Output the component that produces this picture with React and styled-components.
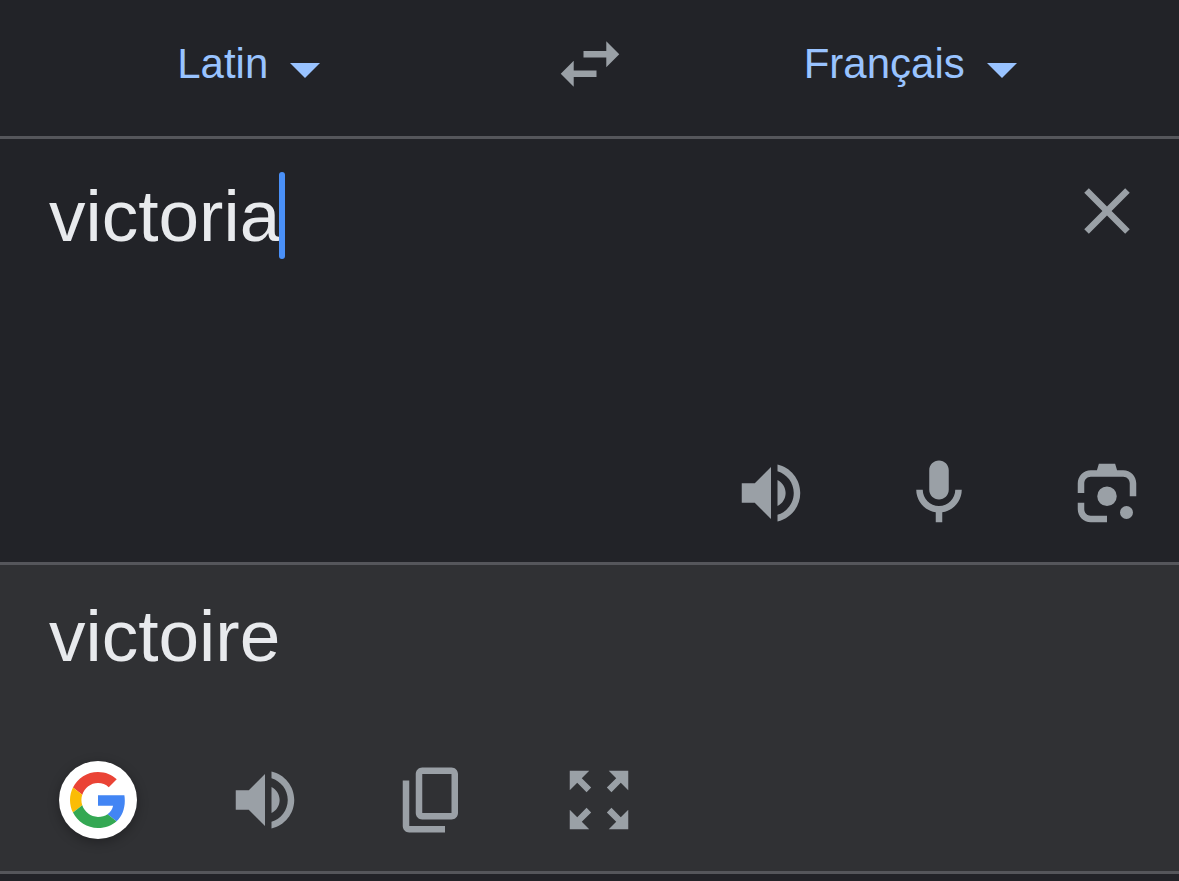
import React, { useState } from "react";
import styled, { createGlobalStyle } from "styled-components";

const LANGUAGES = ["Latin", "Français", "English", "Deutsch", "Español"];

const PATHS = {
  swap: "M6.99 11L3 15l3.99 4v-3H14v-2H6.99v-3zM21 9l-3.99-4v3H10v2h7.01v3L21 9z",
  close:
    "M19 6.41L17.59 5 12 10.59 6.41 5 5 6.41 10.59 12 5 17.59 6.41 19 12 13.41 17.59 19 19 17.59 13.41 12z",
  volume:
    "M3 9v6h4l5 5V4L7 9H3zM16.5 12c0-1.77-1.02-3.29-2.5-4.03v8.05c1.48-.73 2.5-2.25 2.5-4.02zM14 3.23v2.06c2.89.86 5 3.54 5 6.71s-2.11 5.85-5 6.71v2.06c4.01-.91 7-4.49 7-8.77s-2.99-7.86-7-8.77z",
  mic: "M12 14c1.66 0 3-1.34 3-3V5c0-1.66-1.34-3-3-3S9 3.34 9 5v6c0 1.66 1.34 3 3 3zM17 11c0 2.76-2.24 5-5 5s-5-2.24-5-5H5c0 3.53 2.61 6.43 6 6.92V21h2v-3.08c3.39-.49 6-3.39 6-6.92h-2z",
  lens: "M3 12V9c0-2.2 1.8-4 4-4h1.9l.6-2h5l.6 2H17c2.2 0 4 1.8 4 4v4h-2V9c0-1.1-.9-2-2-2H7c-1.1 0-2 .9-2 2v3H3zM3 15h2v2c0 1.1.9 2 2 2h5v2H7c-2.2 0-4-1.8-4-4v-2zM12 10a3 3 0 1 0 0 6 3 3 0 0 0 0-6zM18 16a2 2 0 1 0 0 4 2 2 0 0 0 0-4z",
  copy: "M9 2h9c1.1 0 2 .9 2 2v12c0 1.1-.9 2-2 2H9c-1.1 0-2-.9-2-2V4c0-1.1.9-2 2-2zM9 4v12h9V4H9zM3 6h2v14h11v2H5c-1.1 0-2-.9-2-2V6z",
  expand:
    "M15 3l2.3 2.3-2.89 2.87 1.42 1.42L18.7 6.7 21 9V3zM3 9l2.3-2.3 2.87 2.89 1.42-1.42L6.7 5.3 9 3H3zm6 12l-2.3-2.3 2.89-2.87-1.42-1.42L5.3 17.3 3 15v6zm12-6l-2.3 2.3-2.87-2.89-1.42 1.42 2.89 2.87L15 21h6z",
};

function Action({ icon, label, onClick }) {
  return (
    <IconButton type="button" aria-label={label} onClick={onClick}>
      <svg viewBox="0 0 24 24" fill="currentColor" fillRule="evenodd">
        <path d={PATHS[icon]} />
      </svg>
    </IconButton>
  );
}

function LanguagePicker({ label, value, onChange }) {
  return (
    <PickerCell>
      <Picker>
        <LanguageSelect
          aria-label={label}
          value={value}
          onChange={(e) => onChange(e.target.value)}
        >
          {LANGUAGES.map((name) => (
            <option key={name}>{name}</option>
          ))}
        </LanguageSelect>
        <Arrow viewBox="0 0 30 15">
          <path d="M0 0h30L15 15z" fill="currentColor" />
        </Arrow>
      </Picker>
    </PickerCell>
  );
}

function GoogleLogo() {
  return (
    <svg viewBox="0 0 48 48">
      <path
        fill="#ea4335"
        d="M24 9.5c3.54 0 6.71 1.22 9.21 3.6l6.85-6.85C35.9 2.38 30.47 0 24 0 14.62 0 6.51 5.38 2.56 13.22l7.98 6.19C12.43 13.72 17.74 9.5 24 9.5z"
      />
      <path
        fill="#4285f4"
        d="M46.98 24.55c0-1.57-.15-3.09-.38-4.55H24v9.02h12.94c-.58 2.96-2.26 5.48-4.78 7.18l7.73 6c4.51-4.18 7.09-10.36 7.09-17.65z"
      />
      <path
        fill="#fbbc05"
        d="M10.53 28.59c-.48-1.45-.76-2.99-.76-4.59s.27-3.14.76-4.59l-7.98-6.19C.92 16.46 0 20.12 0 24c0 3.88.92 7.54 2.56 10.78l7.97-6.19z"
      />
      <path
        fill="#34a853"
        d="M24 48c6.48 0 11.93-2.13 15.89-5.81l-7.73-6c-2.15 1.45-4.92 2.3-8.16 2.3-6.26 0-11.57-4.22-13.47-9.91l-7.98 6.19C6.51 42.62 14.62 48 24 48z"
      />
    </svg>
  );
}

function App() {
  const [from, setFrom] = useState("Latin");
  const [to, setTo] = useState("Français");
  const [text, setText] = useState("victoria");

  const swap = () => {
    setFrom(to);
    setTo(from);
  };

  return (
    <>
      <GlobalStyle />
      <Header>
        <LanguagePicker label="Source language" value={from} onChange={setFrom} />
        <Action icon="swap" label="Swap languages" onClick={swap} />
        <LanguagePicker label="Target language" value={to} onChange={setTo} />
      </Header>
      <Source>
        <EntryRow>
          <Entry
            aria-label="Text to translate"
            value={text}
            spellCheck={false}
            onChange={(e) => setText(e.target.value)}
          />
          <Caret />
          <Action icon="close" label="Clear text" onClick={() => setText("")} />
        </EntryRow>
        <SourceActions>
          <Action icon="volume" label="Listen" />
          <Action icon="mic" label="Voice input" />
          <Action icon="lens" label="Translate with camera" />
        </SourceActions>
      </Source>
      <Target>
        <Translation>victoire</Translation>
        <TargetActions>
          <LogoButton type="button" aria-label="Search with Google">
            <GoogleLogo />
          </LogoButton>
          <Action icon="volume" label="Listen to translation" />
          <Action icon="copy" label="Copy translation" />
          <Action icon="expand" label="Full screen" />
        </TargetActions>
      </Target>
    </>
  );
}

const GlobalStyle = createGlobalStyle`
  * {
    box-sizing: border-box;
  }

  body {
    margin: 0;
    background-color: #222328;
    color: #e8eaed;
    font-family: "Liberation Sans", Arial, sans-serif;
  }

  button, input, select {
    margin: 0;
    padding: 0;
    border: none;
    background: none;
    color: inherit;
    font: inherit;
  }
`;

const Header = styled.header`
  display: grid;
  grid-template-columns: 1fr auto 1fr;
  column-gap: 33px;
  align-items: center;
  padding: 25px 0 33px;
  border-bottom: 3px solid #55565b;
`;

const PickerCell = styled.div`
  display: flex;
  justify-content: center;
  padding-right: 20px;
`;

const Picker = styled.div`
  position: relative;
  color: #99c3ff;
`;

const LanguageSelect = styled.select`
  display: block;
  appearance: none;
  field-sizing: content;
  height: 48px;
  padding-right: 52px;
  font-size: 42px;
  line-height: 48px;
  cursor: pointer;

  option {
    background-color: #303134;
  }
`;

const Arrow = styled.svg`
  position: absolute;
  right: 0;
  bottom: 10px;
  width: 30px;
  height: 15px;
  pointer-events: none;
`;

const IconButton = styled.button`
  flex: none;
  width: 78px;
  height: 78px;
  color: #9aa0a6;
  cursor: pointer;

  svg {
    display: block;
    width: 100%;
    height: 100%;
  }
`;

const Source = styled.section`
  padding: 33px 33px 30px 49px;
  border-bottom: 3px solid #55565b;
`;

const EntryRow = styled.div`
  display: flex;
  align-items: flex-start;
  min-height: 282px;

  ${IconButton} {
    margin-left: auto;
  }
`;

const Entry = styled.input`
  field-sizing: content;
  min-width: 0;
  height: 87px;
  font-size: 73px;
  line-height: 87px;
  outline: none;
  caret-color: transparent;
`;

const Caret = styled.span`
  flex: none;
  width: 6px;
  height: 87px;
  margin-left: -1px;
  border-radius: 3px;
  background-color: #4a90f8;
`;

const Actions = styled.div`
  display: flex;
`;

const SourceActions = styled(Actions)`
  justify-content: flex-end;
  gap: 90px;
`;

const Target = styled.section`
  padding: 27px 33px 32px 49px;
  border-bottom: 3px solid #55565b;
  background-color: #303134;
`;

const Translation = styled.p`
  margin: 0 0 82px;
  font-size: 73px;
  line-height: 87px;
`;

const TargetActions = styled(Actions)`
  padding-left: 10px;
  gap: 89px;
`;

const LogoButton = styled.button`
  display: flex;
  align-items: center;
  justify-content: center;
  width: 78px;
  height: 78px;
  border-radius: 50%;
  background-color: #fff;
  box-shadow: 0 3px 12px rgba(0, 0, 0, 0.3);
  cursor: pointer;

  svg {
    width: 56px;
    height: 56px;
  }
`;

export default App;
